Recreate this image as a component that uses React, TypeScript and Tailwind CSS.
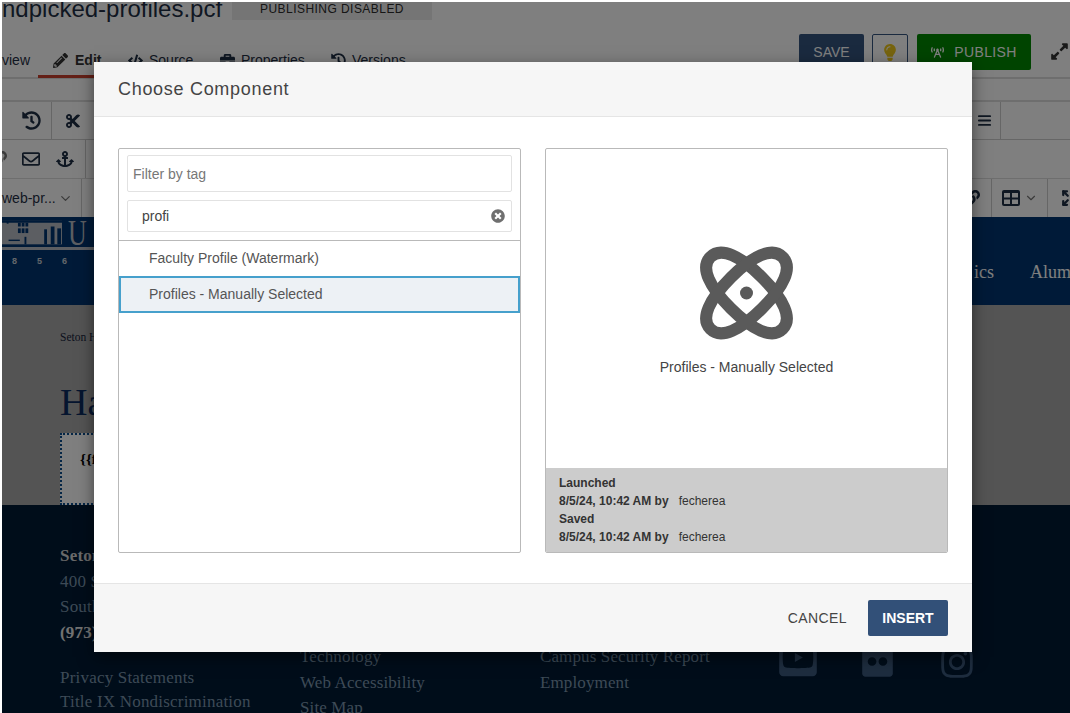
import {
  FaAnchor,
  FaBriefcase,
  FaBroadcastTower,
  FaCode,
  FaCut,
  FaExpandAlt,
  FaFlickr,
  FaHistory,
  FaInstagram,
  FaLightbulb,
  FaLink,
  FaPencilAlt,
  FaRegEnvelope,
  FaTimesCircle,
  FaYoutubeSquare,
} from "react-icons/fa";
import { AlignJustify, ChevronDown, Expand } from "lucide-react";

const sans = "font-['Liberation_Sans',Arial,sans-serif]";
const serif = "font-['Liberation_Serif','Times_New_Roman',serif]";

const orbit = "M-51 0C-51 -15 -30 -22 0 -22S51 -15 51 0S30 22 0 22S-51 15 -51 0Z";

const AtomIcon = () => (
  <svg viewBox="0 0 95 94" className="w-[95px] h-[94px]" fill="none">
    <g transform="translate(47.5 47)">
      <path d={orbit} transform="rotate(45)" stroke="#5a5a5a" strokeWidth="12" />
      <path d={orbit} transform="rotate(-45)" stroke="#5a5a5a" strokeWidth="12" />
      <circle r="6.5" fill="#5a5a5a" />
    </g>
  </svg>
);

const TableIcon = () => (
  <svg viewBox="0 0 18 16" className="w-[18px] h-[16px]">
    <rect width="18" height="16" rx="2" fill="#1f2f45" />
    <rect x="2" y="3" width="6" height="4.5" fill="#ffffff" />
    <rect x="10" y="3" width="6" height="4.5" fill="#ffffff" />
    <rect x="2" y="9.5" width="6" height="4.5" fill="#ffffff" />
    <rect x="10" y="9.5" width="6" height="4.5" fill="#ffffff" />
  </svg>
);

const CampusSkyline = () => (
  <svg viewBox="0 0 64 28" className="w-[64px] h-[28px] mt-[3px]">
    <rect width="64" height="25" fill="#b9bdc4" />
    <rect x="0" y="0" width="64" height="2" fill="#003470" />
    <rect x="5" y="0" width="2" height="3" fill="#003470" />
    {[17, 21, 25].map((x) => (
      <g key={x} fill="#003470">
        <rect x={x} y="2" width="3" height="4" />
        <rect x={x} y="8" width="3" height="5" />
      </g>
    ))}
    <rect x="7" y="20" width="12" height="1.5" fill="#003470" />
    <rect x="24" y="17" width="2" height="8" fill="#003470" />
    <rect x="45" y="9" width="3" height="16" fill="#003470" />
    <rect x="52" y="6" width="4" height="19" fill="#003470" />
    <rect x="59" y="8" width="4" height="17" fill="#003470" />
  </svg>
);

const EditorChrome = () => (
  <div className={`${sans} bg-white text-[#1f2f45]`}>
    <div className="h-[32px] flex items-start overflow-hidden">
      <h1 className="text-[24px] leading-[22px] -mt-[4px] w-[230px] whitespace-nowrap">ndpicked-profiles.pcf</h1>
      <span className="w-[200px] h-[18px] bg-[#ebebeb] text-[12px] leading-[14px] tracking-[0.45px] text-center text-[#2c2c2c]">
        PUBLISHING DISABLED
      </span>
    </div>
    <div className="h-[45px] flex items-start border-b-2 border-[#dddddd]">
      <div className="flex h-[45px] w-[797px] text-[14px] items-start pt-[16px]">
        <span className="w-[36px]">view</span>
        <span className="relative flex items-center gap-[7px] w-[72px] pl-[15px] font-bold text-[#333333]">
          <FaPencilAlt className="w-[15px] h-[15px]" />
          Edit
          <span className="absolute left-0 top-[25px] w-[56px] h-[3px] bg-[#c8412f]" />
        </span>
        <span className="flex items-center gap-[6px] w-[110px] pl-[18px]">
          <FaCode className="w-[15px] h-[15px]" />
          Source
        </span>
        <span className="flex items-center gap-[6px] w-[111px]">
          <FaBriefcase className="w-[15px] h-[15px]" />
          Properties
        </span>
        <span className="flex items-center gap-[6px]">
          <FaHistory className="w-[15px] h-[15px]" />
          Versions
        </span>
      </div>
      <div className="flex items-start">
        <button className="w-[65px] h-[36px] rounded-[2px] bg-[#34557f] text-[14px] text-white">SAVE</button>
        <button className="w-[36px] h-[36px] ml-[8px] rounded-[2px] border border-[#34557f] flex items-center justify-center">
          <FaLightbulb className="w-[12px] h-[17px] text-[#eec81c]" />
        </button>
        <button className="w-[114px] h-[36px] ml-[9px] rounded-[2px] bg-[#008800] text-[14px] tracking-[0.4px] text-white flex items-center justify-center gap-[10px]">
          <FaBroadcastTower className="w-[13px] h-[13px]" />
          PUBLISH
        </button>
        <FaExpandAlt className="w-[19px] h-[19px] ml-[19px] mt-[8px] text-[#333333]" />
      </div>
    </div>
    <div className="h-[21px] bg-white" />
    <div className="h-[39px] border-t-2 border-[#dddddd] flex items-center">
      <span className="w-[50px] h-full border-r border-[#cccccc] flex items-center justify-center pl-[10px]">
        <FaHistory className="w-[19px] h-[19px]" />
      </span>
      <span className="w-[42px] flex justify-center h-full items-center">
        <FaCut className="w-[16px] h-[16px]" />
      </span>
      <span className="ml-auto w-[20px] flex justify-center">
        <AlignJustify className="w-[15px] h-[15px]" strokeWidth={3} />
      </span>
      <span className="w-[70px] h-full border-l border-[#cccccc] ml-[6px]" />
    </div>
    <div className="h-[39px] border-t border-[#cccccc] flex items-center overflow-hidden">
      <FaLink className="w-[16px] h-[16px] -ml-[11px] text-[#777777]" />
      <FaRegEnvelope className="w-[18px] h-[18px] ml-[15px]" />
      <FaAnchor className="w-[18px] h-[18px] ml-[16px]" />
      <span className="h-full w-[1px] bg-[#cccccc] ml-[11px]" />
    </div>
    <div className="h-[39px] border-t border-[#dddddd] flex items-center">
      <span className="w-[52px] text-[14px] whitespace-nowrap">web-pr...</span>
      <ChevronDown className="w-[15px] h-[15px] ml-[4px] text-[#777777]" />
      <span className="h-full w-[1px] bg-[#cccccc] ml-[8px]" />
      <span className="ml-auto w-[56px] h-full border-r border-[#cccccc] flex items-center justify-end pr-[11px]">
        <FaLink className="w-[16px] h-[16px]" />
      </span>
      <span className="w-[56px] h-full border-r border-[#cccccc] flex items-center justify-center gap-[4px]">
        <TableIcon />
        <ChevronDown className="w-[14px] h-[14px] text-[#777777]" />
      </span>
      <span className="w-[22px] pl-[13px]">
        <Expand className="w-[18px] h-[18px]" strokeWidth={3} />
      </span>
    </div>
  </div>
);

const Banner = () => (
  <div className={`${serif} h-[88px] bg-[#003470] text-white flex justify-between overflow-hidden`}>
    <div className="w-[92px]">
      <div className="h-[33px] border-b-[3px] border-[#b9bdc4] flex items-start">
        <CampusSkyline />
        <span className="text-[36px] leading-[32px] text-[#b9bdc4] ml-[6px] scale-x-[0.72] origin-left">U</span>
      </div>
      <div className={`${sans} flex gap-[20px] pl-[10px] pt-[5px] text-[9px] font-bold text-[#c8ced6]`}>
        <span>8</span>
        <span>5</span>
        <span>6</span>
      </div>
    </div>
    <div className="flex gap-[36px] pt-[42px] text-[18px] whitespace-nowrap">
      <span>ics</span>
      <span className="w-[40px]">Alumni</span>
    </div>
  </div>
);

const Content = () => (
  <div className={`${serif} h-[200px] bg-[#a8a8a8] pl-[58px] overflow-hidden`}>
    <p className="pt-[25px] text-[11.5px] leading-[14px] text-[#17233a]">Seton Hall</p>
    <h2 className="mt-[36px] text-[38px] leading-[44px] text-[#0a2a5e]">Handpicked</h2>
    <div className="mt-[9px] h-[72px] w-[300px] bg-white border-2 border-dotted border-[#0a4c8c] pl-[18px] pt-[13px] text-[15px] font-bold text-black">
      {"{{faculty}}"}
    </div>
  </div>
);

const Footer = () => (
  <div className={`${serif} h-[208px] bg-[#001a34] flex text-[#7a94ac] text-[17px] overflow-hidden`}>
    <div className="w-[298px] pl-[58px] pt-[38px] shrink-0 tracking-[0.2px]">
      <p className="leading-[26px] font-bold text-[#d4d4d4]">Seton Hall</p>
      <p className="leading-[25px]">400 South</p>
      <p className="leading-[26px]">South Orange</p>
      <p className="leading-[26px] font-bold text-[#e5e5e5]">(973) 761</p>
      <p className="mt-[20px] leading-[24px]">Privacy Statements</p>
      <p className="leading-[24px]">Title IX Nondiscrimination</p>
    </div>
    <div className="w-[240px] pt-[139px] shrink-0 tracking-[0.12px]">
      <p className="leading-[25.5px]">Technology</p>
      <p className="leading-[25.5px]">Web Accessibility</p>
      <p className="leading-[25.5px]">Site Map</p>
    </div>
    <div className="w-[239px] pt-[139px] shrink-0 tracking-[0.12px]">
      <p className="leading-[25.5px]">Campus Security Report</p>
      <p className="leading-[25.5px]">Employment</p>
    </div>
    <div className="flex items-start text-[#3d5a7e]">
      <FaYoutubeSquare className="w-[38px] h-[43px] mt-[131px]" />
      <FaFlickr className="w-[31px] h-[35px] mt-[139px] ml-[45px]" />
      <FaInstagram className="w-[32px] h-[36px] mt-[139px] ml-[48px]" />
    </div>
  </div>
);

const ComponentList = () => (
  <div className="w-[403px] h-[405px] rounded-[2px] border border-[#b9b9b9] flex flex-col">
    <div className="h-[92px] px-[8px] pt-[6px] flex flex-col gap-[8px] border-b border-[#b9b9b9]">
      <input
        readOnly
        placeholder="Filter by tag"
        className="h-[37px] w-full rounded-[2px] border border-[#e2e2e2] px-[5px] text-[14px] text-[#333333] placeholder:text-[#777777] outline-none"
      />
      <div className="h-[32px] rounded-[2px] border border-[#e2e2e2] flex items-center justify-between pl-[14px] pr-[6px] text-[14px] text-[#444444]">
        <span>profi</span>
        <FaTimesCircle className="w-[14px] h-[14px] text-[#6f6f6f]" />
      </div>
    </div>
    <div className="h-[35px] flex items-center pl-[30px] text-[14px] text-[#555555]">Faculty Profile (Watermark)</div>
    <div className="h-[37px] border-2 border-[#46a0cc] bg-[#edf1f5] flex items-center pl-[28px] text-[14px] text-[#555555]">
      Profiles - Manually Selected
    </div>
  </div>
);

const Preview = () => (
  <div className="w-[403px] h-[405px] rounded-[2px] border border-[#b9b9b9] flex flex-col overflow-hidden">
    <div className="h-[319px] flex flex-col items-center pt-[97px]">
      <AtomIcon />
      <p className="mt-[18px] text-[14px] leading-[18px] text-[#444444]">Profiles - Manually Selected</p>
    </div>
    <div className="flex-1 bg-[#cccccc] pl-[13px] pt-[6px] text-[12px] leading-[18px] text-[#333333]">
      <p className="font-bold">Launched</p>
      <p>
        <span className="font-bold">8/5/24, 10:42 AM by</span>
        <span className="ml-[10px]">fecherea</span>
      </p>
      <p className="font-bold">Saved</p>
      <p>
        <span className="font-bold">8/5/24, 10:42 AM by</span>
        <span className="ml-[10px]">fecherea</span>
      </p>
    </div>
  </div>
);

const ChooseComponentModal = () => (
  <div
    className={`${sans} absolute left-[94px] top-[62px] w-[878px] h-[590px] bg-white flex flex-col shadow-[0_5px_15px_rgba(0,0,0,0.5)]`}
  >
    <div className="h-[55px] bg-[#f6f6f6] border-b border-[#e5e5e5] flex items-center pl-[24px]">
      <h3 className="text-[18px] tracking-[0.7px] text-[#444444]">Choose Component</h3>
    </div>
    <div className="h-[467px] border-b border-[#e5e5e5] flex gap-[24px] pl-[24px] pt-[31px]">
      <ComponentList />
      <Preview />
    </div>
    <div className="flex-1 bg-[#f6f6f6] flex items-start justify-end gap-[21px] pr-[24px] pt-[16px]">
      <button className="h-[36px] text-[14px] tracking-[0.4px] text-[#444444]">CANCEL</button>
      <button className="w-[80px] h-[36px] rounded-[2px] bg-[#325078] text-[14px] font-bold text-white">INSERT</button>
    </div>
  </div>
);

export default function App() {
  return (
    <div className="relative w-[1070px] h-[713px] overflow-hidden bg-white">
      <div className="ml-[2px] mt-[2px]">
        <EditorChrome />
        <Banner />
        <Content />
        <Footer />
      </div>
      <div className="absolute left-[2px] top-[2px] right-0 bottom-0 bg-black/50" />
      <ChooseComponentModal />
    </div>
  );
}
